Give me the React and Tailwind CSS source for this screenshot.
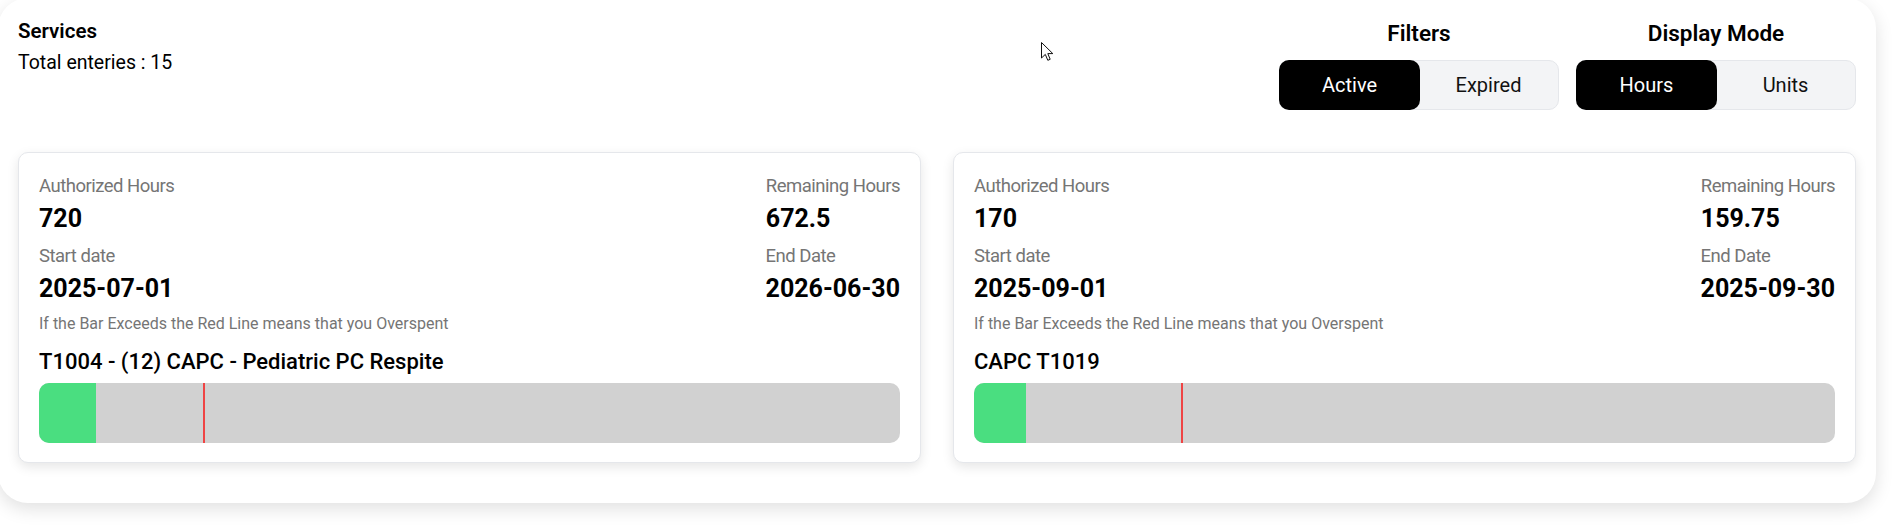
import React from "react";

function Toggle({ label, a, b }) {
  return (
    <div className="flex w-[280px] flex-col items-center">
      <div className="text-[22.5px] font-semibold leading-[35px] text-black">{label}</div>
      <div className="mt-[9px] flex h-[50px] w-full rounded-[10px] border border-[#e5e7eb] bg-[#f3f4f6]">
        <button className="-m-px h-[50px] w-[141px] rounded-[10px] bg-black text-[20px] text-white">{a}</button>
        <button className="flex-1 text-[20px] text-[#111111]">{b}</button>
      </div>
    </div>
  );
}

function Stat({ label, value }) {
  return (
    <div>
      <div className="text-[18.5px] leading-[30px] tracking-[-0.5px] text-[#757575]">{label}</div>
      <div className="text-[25px] font-bold leading-[35px] text-black">{value}</div>
    </div>
  );
}

function Card({ auth, rem, start, end, title, used, line }) {
  return (
    <div className="rounded-[10px] border border-[#e5e7eb] bg-white px-5 pb-[19px] pt-[18px] shadow-[0_4px_12px_rgba(0,0,0,0.10)]">
      <div className="flex justify-between">
        <Stat label="Authorized Hours" value={auth} />
        <Stat label="Remaining Hours" value={rem} />
      </div>
      <div className="mt-[5px] flex justify-between">
        <Stat label="Start date" value={start} />
        <Stat label="End Date" value={end} />
      </div>
      <p className="mt-[5px] text-[16px] leading-[25px] text-[#757575]">
        If the Bar Exceeds the Red Line means that you Overspent
      </p>
      <div className="mt-2 text-[22px] font-medium leading-[35px] text-black">{title}</div>
      <div className="relative mt-[4px] h-[60px] overflow-hidden rounded-[10px] bg-[#d1d1d1]">
        <div className="h-full bg-[#4ade80]" style={{ width: used }} />
        <div className="absolute top-0 h-full w-[2px] bg-[#ef4444]" style={{ left: line }} />
      </div>
    </div>
  );
}

export default function App() {
  return (
    <div className="relative h-[530px] w-[1895px] overflow-hidden bg-white font-['Roboto','Noto_Sans',sans-serif] text-black">
      <div className="-ml-[2px] -mt-[2px] w-[1878px] rounded-[30px] bg-white px-5 pb-10 pt-[18px] shadow-[0_6px_18px_rgba(0,0,0,0.12)]">
        <div className="flex h-[94px] items-start justify-between">
          <div>
            <div className="text-[20.5px] font-semibold leading-[30px]">Services</div>
            <div className="pt-[2px] text-[19.5px] leading-[30px]">Total enteries : 15</div>
          </div>
          <div className="flex gap-[17px]">
            <Toggle label="Filters" a="Active" b="Expired" />
            <Toggle label="Display Mode" a="Hours" b="Units" />
          </div>
        </div>
        <div className="mt-[42px] grid grid-cols-2 gap-[32px]">
          <Card
            auth="720"
            rem="672.5"
            start="2025-07-01"
            end="2026-06-30"
            title="T1004 - (12) CAPC - Pediatric PC Respite"
            used="6.6%"
            line="19.1%"
          />
          <Card
            auth="170"
            rem="159.75"
            start="2025-09-01"
            end="2025-09-30"
            title="CAPC T1019"
            used="6.03%"
            line="24%"
          />
        </div>
      </div>
      <svg className="absolute left-[1041px] top-[42px]" width="13" height="20" viewBox="0 0 13 20">
        <path d="M0.5 0.5 L0.5 16 L4.3 12.4 L6.8 18.3 L9.2 17.3 L6.8 11.6 L11.8 11.6 Z" fill="white" stroke="#111" strokeWidth="1" strokeLinejoin="miter" />
      </svg>
    </div>
  );
}
